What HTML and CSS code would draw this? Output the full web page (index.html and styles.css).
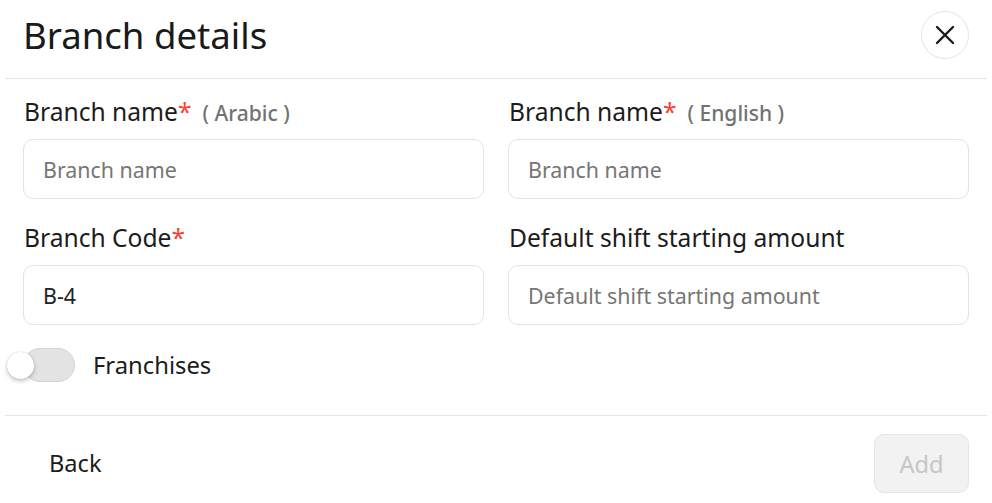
FILE: index.html
```html
<!DOCTYPE html>
<html>
<head>
<meta charset="utf-8">
<link rel="stylesheet" href="styles.css">
</head>
<body>
<div class="modal">
  <header class="head">
    <h1 class="title">Branch details</h1>
    <button class="close" aria-label="Close">
      <svg width="22" height="22" viewBox="0 0 22 22"><path d="M3 3 L19 19 M19 3 L3 19" stroke="#1a1a1a" stroke-width="2.4" stroke-linecap="round" fill="none"/></svg>
    </button>
  </header>
  <div class="divider"></div>
  <div class="body">
    <div class="grid">
      <div class="field">
        <label class="label">Branch name<span class="req">*</span><span class="sub">( Arabic )</span></label>
        <input class="input" placeholder="Branch name">
      </div>
      <div class="field">
        <label class="label">Branch name<span class="req">*</span><span class="sub">( English )</span></label>
        <input class="input" placeholder="Branch name">
      </div>
      <div class="field">
        <label class="label">Branch Code<span class="req">*</span></label>
        <input class="input" value="B-4">
      </div>
      <div class="field">
        <label class="label">Default shift starting amount</label>
        <input class="input" placeholder="Default shift starting amount">
      </div>
    </div>
    <div class="toggle-row">
      <span class="switch"><span class="knob"></span></span>
      <span class="toggle-label">Franchises</span>
    </div>
  </div>
  <div class="divider"></div>
  <footer class="foot">
    <button class="back">Back</button>
    <button class="add" disabled>Add</button>
  </footer>
</div>
</body>
</html>
```
FILE: styles.css
```css
* { box-sizing: border-box; }
html, body { margin: 0; padding: 0; background: #fff; }
body { font-family: "Noto Sans", "Open Sans", sans-serif; color: #1c1c1c; }
.modal { width: 992px; }
.head {
  display: flex; align-items: center; justify-content: space-between;
  height: 78px; padding: 11px 23px 19px 23px;
}
.title { margin: 0; font-size: 36.6px; font-weight: 400; line-height: 48px; color: #1a1a1a; }
.close {
  width: 48px; height: 48px; border-radius: 50%;
  border: 1px solid #e4e4e4; background: #fff;
  display: flex; align-items: center; justify-content: center; padding: 0;
}
.divider { height: 1px; background: #e6e6e6; margin: 0 5px; }
.body { padding: 17px 23px 33px 23px; }
.grid { display: grid; grid-template-columns: 1fr 1fr; column-gap: 24px; row-gap: 23px; }
.field { display: flex; flex-direction: column; gap: 11px; }
.label { display: block; height: 32px; overflow: visible; font-size: 24.6px; line-height: 32px; padding-left: 1px; color: #1c1c1c; white-space: nowrap; }
.req { color: #f44336; }
.sub { font-size: 21px; line-height: 1; color: #727272; font-weight: 500; margin-left: 11px; }
.input {
  height: 60px; width: 100%;
  border: 1px solid #e2e2e2; border-radius: 10px;
  padding: 0 19px; font-family: inherit; font-size: 21.4px; color: #222;
  outline: none; background: #fff;
}
.input::placeholder { color: #767676; }
.toggle-row { display: flex; align-items: center; gap: 18px; margin-top: 23px; height: 34px; }
.switch {
  position: relative; width: 52px; height: 34px; border-radius: 17px;
  background: #e3e3e3; border: 1px solid #d3d3d3; flex: none;
}
.knob {
  position: absolute; left: -17px; top: 3px; width: 27px; height: 27px; border-radius: 50%;
  background: #fff; box-shadow: 0 2px 4px rgba(0,0,0,0.25), 0 0 1px rgba(0,0,0,0.2);
}
.toggle-label { font-size: 23.8px; line-height: 32px; color: #1c1c1c; }
.foot { display: flex; justify-content: space-between; align-items: center; padding: 18px 23px 10px 24px; }
.back {
  border: none; background: transparent; font-family: inherit; font-size: 23.6px;
  color: #1c1c1c; padding: 0 25px; height: 59px; line-height: 59px;
}
.add {
  width: 95px; height: 59px; border-radius: 10px;
  background: #f2f2f2; border: 1px solid #e5e5e5;
  font-family: inherit; font-size: 23.6px; color: #c6c6c6; padding: 0;
}
```
